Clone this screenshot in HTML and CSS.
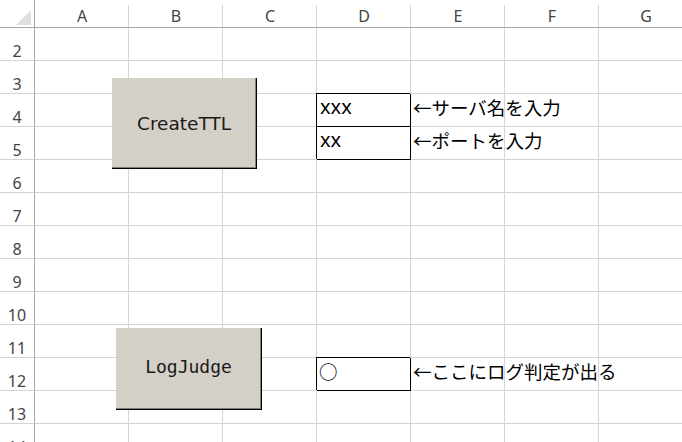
FILE: index.html
```html
<!DOCTYPE html>
<html lang="ja">
<head>
    <meta charset="UTF-8">
    <title>Sheet1</title>
    <link rel="stylesheet" href="styles.css">
</head>
<body>
    <div class="sheet" id="sheet">
        <button class="btn btn-create">CreateTTL</button>
        <button class="btn btn-judge">LogJudge</button>
    </div>

    <script>
        // 列と行
        const cols = ['A', 'B', 'C', 'D', 'E', 'F', 'G'];
        const firstRow = 2;
        const lastRow = 14;

        // セルの中身
        const cells = {
            D4: { text: 'xxx', box: true },
            D5: { text: 'xx', box: true },
            D12: { text: '○', box: true, note: true },
            E4: { text: '←サーバ名を入力', note: true },
            E5: { text: '←ポートを入力', note: true },
            E12: { text: '←ここにログ判定が出る', note: true }
        };

        const sheet = document.getElementById('sheet');

        function addCell(cls, text) {
            const div = document.createElement('div');
            div.className = cls;
            if (text) div.textContent = text;
            sheet.appendChild(div);
            return div;
        }

        // 見出し行
        addCell('corner');
        cols.forEach(c => addCell('col-head', c));

        // 本体
        for (let r = firstRow; r <= lastRow; r++) {
            addCell('row-head', String(r));
            cols.forEach(c => {
                const data = cells[c + r];
                let cls = 'cell';
                if (data && data.box) cls += ' boxed';
                const cell = addCell(cls);
                if (data) {
                    const span = document.createElement('span');
                    span.className = data.note ? 'note' : 'value';
                    span.textContent = data.text;
                    cell.appendChild(span);
                }
            });
        }
    </script>
</body>
</html>
```

FILE: styles.css
```css
body {
    margin: 0;
    background: #fff;
    overflow: hidden;
}
.sheet {
    position: relative;
    display: grid;
    grid-template-columns: 35px repeat(7, 94px);
    grid-template-rows: 28px;
    grid-auto-rows: 33px;
    width: 693px;
}
.corner,
.col-head,
.row-head,
.cell {
    box-sizing: border-box;
    position: relative;
}
.corner {
    border-right: 1px solid #a6a6a6;
    border-bottom: 1px solid #a6a6a6;
}
.corner::after {
    content: "";
    position: absolute;
    left: 16px;
    top: 10px;
    width: 15px;
    height: 15px;
    background: #dfdfdf;
    clip-path: polygon(100% 0, 100% 100%, 0 100%);
}
.col-head {
    border-bottom: 1px solid #a6a6a6;
    display: flex;
    align-items: flex-end;
    justify-content: center;
    padding-bottom: 3px;
    font-family: "Noto Sans", sans-serif;
    font-size: 16px;
    line-height: 16px;
    color: #444;
}
.col-head::after {
    content: "";
    position: absolute;
    right: 0;
    top: 5px;
    bottom: 0;
    width: 1px;
    background: #d4d4d4;
}
.row-head {
    border-right: 1px solid #a6a6a6;
    border-bottom: 1px solid #d4d4d4;
    display: flex;
    align-items: flex-end;
    justify-content: center;
    padding-bottom: 1px;
    font-family: "Noto Sans", sans-serif;
    font-size: 16px;
    line-height: 16px;
    color: #444;
}
.cell {
    border-right: 1px solid #d4d4d4;
    border-bottom: 1px solid #d4d4d4;
    padding-left: 3px;
    font-family: "Noto Sans", "Noto Sans CJK JP", sans-serif;
    font-size: 20px;
    line-height: 26px;
    color: #000;
    white-space: nowrap;
}
.cell .note {
    font-family: "Noto Sans CJK JP", sans-serif;
    font-size: 18.5px;
    margin-left: -1px;
}
.boxed {
    border-right-color: #000;
    border-bottom-color: #000;
    box-shadow: -1px -1px 0 #000;
}
.btn {
    position: absolute;
    z-index: 1;
    box-sizing: border-box;
    margin: 0;
    padding: 0;
    border: none;
    border-right: 1px solid #000;
    border-bottom: 1px solid #000;
    box-shadow: inset -1px -1px 0 #808080;
    background: #d4d0c8;
    color: #1a1a1a;
    font-size: 18.5px;
    display: flex;
    align-items: center;
    justify-content: center;
}
.btn-create {
    left: 112px;
    top: 78px;
    width: 145px;
    height: 91px;
    font-family: "DejaVu Sans", sans-serif;
}
.btn-judge {
    left: 116px;
    top: 328px;
    width: 146px;
    height: 82px;
    padding-bottom: 4px;
    font-size: 18px;
    font-family: "DejaVu Sans Mono", monospace;
}
```
